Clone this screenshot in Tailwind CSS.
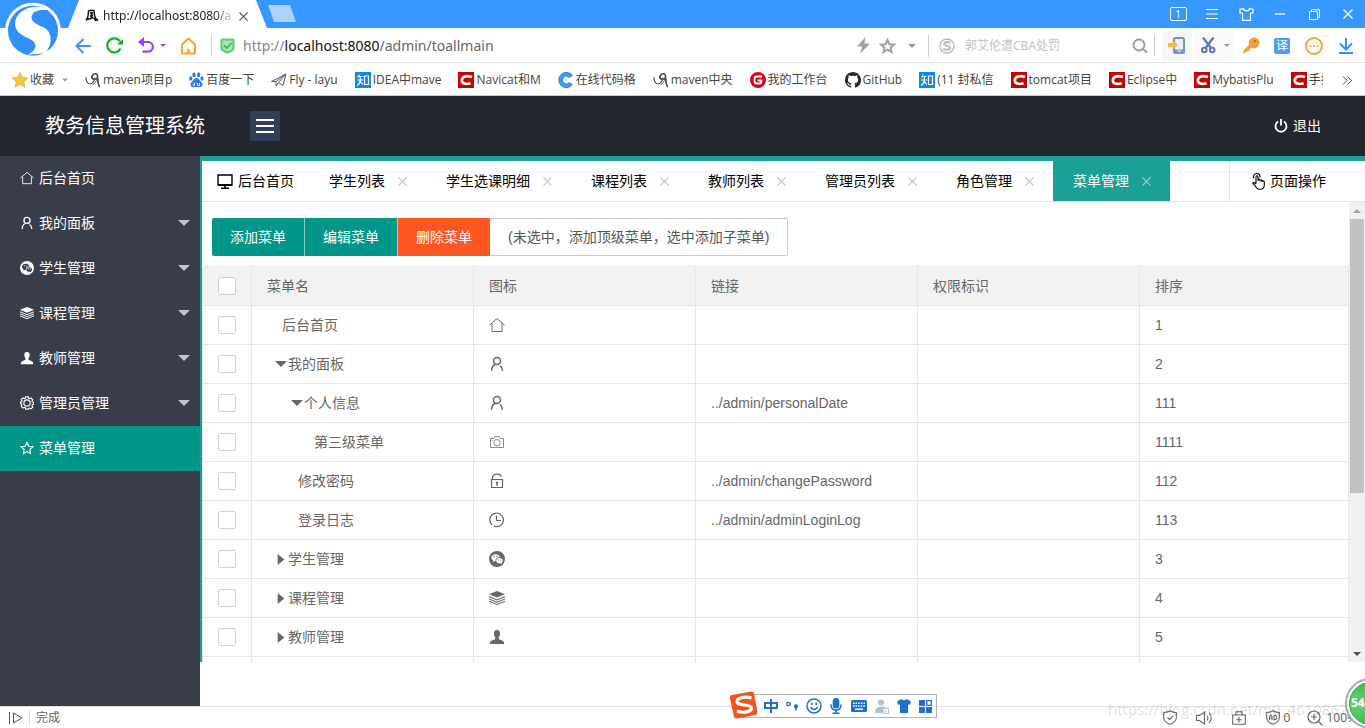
<!DOCTYPE html>
<html lang="zh-CN">
<head>
<meta charset="utf-8">
<title>教务信息管理系统</title>
<script src="https://cdn.jsdelivr.net/npm/@tailwindcss/browser@4"></script>
</head>
<body class="h-screen overflow-hidden flex flex-col bg-white font-['Noto_Sans','Noto_Sans_CJK_SC',sans-serif] text-xs text-[#444]">

<svg class="hidden" aria-hidden="true">
  <symbol id="i-home" viewBox="0 0 16 16"><path d="M.5 8 8 1.500 15.500 8M3 6.500V14.500H13V6.500" fill="none" stroke="currentColor"/></symbol>
  <symbol id="i-user" viewBox="0 0 16 16"><g fill="none" stroke="currentColor" stroke-width="1.500"><circle cx="8" cy="5" r="3.500"/><path d="M2.500 14.800C2.600 11.500 4 9.300 6.300 8.300M11 9.700c1.600 1 2.400 2.800 2.500 5.100"/></g></symbol>
  <symbol id="i-wechat" viewBox="0 0 16 16"><path fill-rule="evenodd" fill="currentColor" d="M8 0a8 8 0 1 0 0 16A8 8 0 0 0 8 0ZM6.500 3.200c2.300 0 4 1.300 4.300 3-2.500-.2-4.600 1.400-4.300 4l-1 0-1.600.9.400-1.500C3 8.800 2.300 7.700 2.300 6.600c0-1.900 1.800-3.400 4.200-3.400Zm4 3.900c1.900 0 3.300 1.200 3.300 2.600 0 .9-.5 1.600-1.200 2.100l.3 1.200-1.300-.7c-2.300.5-4.400-.8-4.400-2.600 0-1.400 1.400-2.600 3.300-2.600Z"/><g fill="currentColor"><circle cx="5" cy="5.500" r=".7"/><circle cx="8" cy="5.500" r=".7"/><circle cx="9.500" cy="9" r=".6"/><circle cx="11.700" cy="9" r=".6"/></g></symbol>
  <symbol id="i-layers" viewBox="0 0 16 16"><path d="M8 1 16 4.300 8 7.600 0 4.300Z" fill="currentColor"/><path d="M0 6.600 8 9.900 16 6.600M0 8.900 8 12.200 16 8.900M0 11.200 8 14.500 16 11.200" fill="none" stroke="currentColor" stroke-width="1.100"/></symbol>
  <symbol id="i-bust" viewBox="0 0 16 16"><path fill="currentColor" d="M8 1c2.100 0 3.200 1.300 3.100 3.500 0 1.700-.7 2.800-1.300 3.500v2c.8 1 5.200 1.400 5.200 3.500V15H1v-1.500C1 11.400 5.400 11 6.200 10V8C5.600 7.300 4.900 6.200 4.900 4.500 4.800 2.300 5.900 1 8 1Z"/></symbol>
  <symbol id="i-gear" viewBox="0 0 16 16"><g fill="none" stroke="currentColor" stroke-width="1.300"><path d="M6.500 1h3l.5 1.700 1 .4 1.600-.8 2 2-.9 1.600.4 1 1.400.3v2.400l-1.400.5-.4 1 .9 1.600-2 2-1.600-.9-1 .5L9.500 15h-3L6 13.400l-1-.5-1.600.9-2-2 .8-1.600-.4-1L.5 8.700V6.900L1.900 6.500l.4-1-.9-1.600 2-1.700 1.600.8 1-.4Z"/><circle cx="8" cy="8" r="3.600"/></g></symbol>
  <symbol id="i-star" viewBox="0 0 16 16"><path d="M8 1.500 10 6l4.800.5-3.600 3.200 1 4.800L8 12l-4.200 2.500 1-4.800L1.200 6.500 6 6Z" fill="none" stroke="currentColor" stroke-width="1.200"/></symbol>
  <symbol id="i-camera" viewBox="0 0 16 16"><g fill="none" stroke="currentColor" stroke-opacity=".75"><path d="M1.500 4.500H5l1-2h4l1 2h3.500v9h-13Z"/><circle cx="8" cy="8.700" r="3.200"/><path d="M3 6.500h1"/></g></symbol>
  <symbol id="i-lock" viewBox="0 0 16 16"><g fill="none" stroke="currentColor" stroke-width="1.200"><path d="M2.500 6.500h11v8h-11ZM3.500 6.500V4.500C3.500 2.300 5.500 1.200 8 1.200s4.200 1 4.500 2.500"/></g><path d="M8 8.500a1.200 1.200 0 0 1 .7 2.200V13H7.400v-2.300A1.200 1.200 0 0 1 8 8.500Z" fill="currentColor"/></symbol>
  <symbol id="i-clock" viewBox="0 0 16 16"><g fill="none" stroke="currentColor" stroke-width="1.200"><path d="M3 12.800A6.800 6.800 0 1 1 5 14.100M7.500 3.500V8.500H12"/></g></symbol>
  <symbol id="i-down" viewBox="0 0 12 6"><path d="M0 0H12L6 6Z" fill="currentColor"/></symbol>
  <symbol id="i-right" viewBox="0 0 6 10"><path d="M0 0V10L6 5Z" fill="currentColor"/></symbol>
  <symbol id="i-x" viewBox="0 0 10 10"><path d="M.5.5 9.500 9.500M9.500.5.5 9.500" fill="none" stroke="currentColor" stroke-width="1.300"/></symbol>
  <symbol id="b-maven" viewBox="0 0 16 16"><g fill="none" stroke="#444" stroke-linecap="round"><path d="M1 5.500C1 9.500 3 12 5 12c2.500 0 4.500-3.500 5-6" stroke-width="1.100"/><path d="M11.500 6.500C9 8.500 6 6.500 7 4S11.500 1 12.300 3c.8 3-.3 7 2 11.500" stroke-width="1.600"/><path d="M12 6c-.5 3-2 5.500-4 6.500" stroke-width=".8"/></g></symbol>
  <symbol id="b-csdn" viewBox="0 0 16 16"><path d="M0 0H16V16H0Z" fill="#c90000"/><path d="M14 5C8.500 3 4.200 4.600 3.800 8c-.3 3.700 4 4.800 8.800 3.300" fill="none" stroke="#fff" stroke-width="2.600"/></symbol>
  <symbol id="b-zhihu" viewBox="0 0 16 16"><path d="M0 0H16V16H0Z" fill="#0f88eb"/><g fill="none" stroke="#fff" stroke-width="1.200"><path d="M4.200 2.500C4 3.500 3.400 4.600 2.500 5.500M3.500 4.500H7.500M2 8H8M5.300 4.500V8C5 10.500 4 12.500 2.200 13.500M5.500 9.500 7.700 12.500M9.500 4h4v8.500h-4Z"/></g></symbol>
</svg>

<header class="relative shrink-0">
  <div class="h-7 bg-[#3698ff] flex items-stretch pl-17">
    <div class="w-[199px] bg-white flex items-center pl-4 pt-1 [clip-path:polygon(11px_0,188px_0,100%_100%,0_100%)] text-[#222]">
      <svg class="w-4 h-4 mr-[3px] shrink-0" viewBox="0 0 16 16" fill="none" stroke="#111" stroke-width="1.500"><path d="M4.500 2.500C4.500 7 4 10 2 12.500M4.500 2.500H10C10 7 11 11 14 12.500M6 5h3M7.500 4v6M6 8l3-.5M3.500 11.500l6-2M10 10l2 3"/></svg>
      <span class="w-[132px] overflow-hidden whitespace-nowrap [mask-image:linear-gradient(90deg,#000_85%,transparent)]">http://localhost:8080/a</span>
      <button class="p-1 text-[#555]" aria-label="关闭标签"><svg class="w-[9px] h-[9px]"><use href="#i-x"/></svg></button>
    </div>
    <button class="w-7 h-[17px] mt-[5px] ml-px bg-[#abd3ff] [clip-path:polygon(0_0,22px_0,100%_100%,6px_100%)]" aria-label="新标签页"></button>
    <div class="ml-auto flex text-white">
      <button class="w-[34px] grid place-items-center" aria-label="窗口数"><span class="w-[17px] h-[14px] border border-white rounded-xs text-[10px] leading-3">1</span></button>
      <button class="w-[34px] grid place-items-center" aria-label="菜单"><svg width="12" height="10" stroke="#fff"><path d="M0 .5H12M0 5H12M0 9.500H12"/></svg></button>
      <button class="w-[34px] grid place-items-center" aria-label="皮肤"><svg width="15" height="13" fill="none" stroke="#fff" stroke-width="1.200"><path d="M4.500.7 1 1.200V5H3.500V12.300h8V5H14V1.200L10.500.7C10 3.500 5 3.500 4.500.7Z"/></svg></button>
      <button class="w-[34px] grid place-items-center" aria-label="最小化"><svg width="10" height="2"><path d="M0 1H10" stroke="#fff" stroke-width="1.200"/></svg></button>
      <button class="w-[34px] grid place-items-center" aria-label="还原"><svg width="11" height="11" fill="none" stroke="#fff"><path d="M.5 2.500h8v8h-8ZM2.500 2.500v-2h8v8h-2"/></svg></button>
      <button class="w-[34px] grid place-items-center" aria-label="关闭"><svg class="w-[10px] h-[10px]"><use href="#i-x"/></svg></button>
    </div>
  </div>

  <div class="h-[35px] border-b border-[#e3e3e3] flex items-center pl-[75px] pt-px">
    <button class="mr-[15px]" aria-label="后退"><svg width="16" height="16" fill="none" stroke="#3698ff" stroke-width="2"><path d="M16 8H1.500M8.500 1 1.500 8l7 7"/></svg></button>
    <button class="mr-[15px]" aria-label="刷新"><svg width="17" height="17" fill="none"><path d="M14.500 11.500A7 7 0 1 1 14 4.500" stroke="#0bb41d" stroke-width="2.200"/><path d="M17 2V7.500H11Z" fill="#0bb41d"/></svg></button>
    <button class="mr-[5px]" aria-label="撤销"><svg width="17" height="17" fill="none"><path d="M4 5H10a4.800 4.800 0 0 1 0 9.700H4.500" stroke="#a33cf0" stroke-width="2.200"/><path d="M6 0V10L0 5Z" fill="#a33cf0"/></svg></button>
    <button class="mr-[14px] text-[#a33cf0]" aria-label="更多"><svg class="w-[6px] h-[3px]"><use href="#i-down"/></svg></button>
    <button class="mr-[14px]" aria-label="主页"><svg width="17" height="18" fill="none" stroke="#ffa51f" stroke-width="2"><path d="M2 7.500 8.500 1.500 15 7.500V16.500H2Z" stroke-linejoin="round"/><path d="M8.500 17V12" stroke-width="2.600"/></svg></button>
    <span class="w-px h-[22px] bg-[#ccc] mr-2"></span>
    <svg class="mr-2" width="15" height="16"><path d="M2 .5H13Q14.500.5 14.500 2V10.500Q14.500 13 7.500 15.800Q.5 13 .5 10.500V2Q.5.5 2 .5Z" fill="#5fc97a"/><path d="M2.500 2.500H12.500V10Q12.500 11.500 7.500 13.500Q2.500 11.500 2.500 10Z" fill="#a9e3b6"/><path d="M4 7.500 6.800 10 11.500 5" stroke="#3cb45a" stroke-width="1.800" fill="none"/></svg>
    <div role="textbox" aria-label="地址栏" contenteditable="true" class="flex-1 text-sm text-[#888] whitespace-nowrap">http://<span class="text-[#111]">localhost:8080</span><span class="text-[#666]">/admin/toallmain</span></div>
    <button class="mr-[9px]" aria-label="极速模式"><svg width="13" height="17" fill="#a0a0a0"><path d="M8.500 0 0 9.500H5L3.500 16.500 13 6.500H7.500Z"/></svg></button>
    <button class="mr-3 text-[#a0a0a0]" aria-label="收藏"><svg width="17" height="16" fill="none" stroke="#a0a0a0" stroke-width="2"><path d="M8.500 2 10.300 6.200 15 6.600 11.500 9.600 12.500 14 8.500 11.700 4.500 14 5.500 9.600 2 6.600 6.700 6.200Z"/></svg></button>
    <button class="mr-3 text-[#999]" aria-label="地址历史"><svg class="w-2 h-1"><use href="#i-down"/></svg></button>
    <span class="w-px h-[22px] bg-[#ccc] mr-[10px]"></span>
    <svg class="mr-[10px]" width="16" height="16" fill="none" stroke="#bbb"><circle cx="8" cy="8" r="7" stroke-width="1.300"/><path d="M11.500 4.800C8.500 3.500 5 4 5.200 6c.2 2.200 5.800 1.500 6 3.800.1 2.200-4 2.400-7 1.200" stroke-width="2"/></svg>
    <input aria-label="搜索" placeholder="郭艾伦遭CBA处罚" class="w-[167px] text-xs outline-none placeholder:text-[#c2c2c2]">
    <button class="mr-[6px]" aria-label="开始搜索"><svg width="16" height="16" fill="none" stroke="#999" stroke-width="1.800"><circle cx="7" cy="7" r="5.500"/><path d="M11 11 15 14.500"/></svg></button>
    <span class="w-px h-[22px] bg-[#ccc] mr-[7px]"></span>
    <button class="w-[30px] h-[30px] rounded-sm bg-[#f6f6f6] grid place-items-center mr-0.5" aria-label="手机"><svg width="18" height="17"><rect x="6" y="1" width="10" height="15" rx="1.500" fill="#e6effb" stroke="#7397c8" stroke-width="2"/><path d="M5.500 12.500H16.500V16H5.500Z" fill="#7397c8"/><path d="M9.500 14H13" stroke="#fff"/><path d="M0 6H4.500V3L10 8 4.500 13V10H0Z" fill="#f8b93c"/></svg></button>
    <button class="w-[39px] h-[30px] rounded-sm bg-[#f9f9f9] flex items-center pl-[7px] gap-2 mr-[10px] text-[#999]" aria-label="截图"><svg width="15" height="17" fill="none" stroke="#6272b8" stroke-width="2"><circle cx="3.300" cy="13" r="2.300"/><circle cx="11.200" cy="13" r="2.300"/><path d="M2 .5 10 11M12.500.5 4.500 11" stroke-width="2.200"/></svg><svg class="w-[6px] h-[3px]"><use href="#i-down"/></svg></button>
    <button class="mr-[14px]" aria-label="密码"><svg width="17" height="17"><path d="M10.500.5a5.500 5.500 0 1 1-2 10.300L6.500 12.500V14H4.500L1.500 16.500H.5V13.500L6 7.800A5.500 5.500 0 0 1 10.500.5Z" fill="#f0a040"/><circle cx="12" cy="4" r="1.200" fill="#b8702a"/></svg></button>
    <button class="w-4 h-4 rounded-xs bg-[#4a9ef8] text-white text-xs leading-4 mr-[15px] grid place-items-center" aria-label="翻译">译</button>
    <button class="mr-4" aria-label="更多功能"><svg width="18" height="18"><circle cx="9" cy="9" r="8" fill="none" stroke="#ffa51f" stroke-width="2"/><g fill="#ffa51f"><circle cx="5.500" cy="9" r="1.100"/><circle cx="9" cy="9" r="1.100"/><circle cx="12.500" cy="9" r="1.100"/></g></svg></button>
    <button class="mr-3" aria-label="下载"><svg width="14" height="16" fill="none" stroke="#2f92f8" stroke-width="2"><path d="M7 0V11M1 5.500 7 11.500 13 5.500M0 15H14"/></svg></button>
  </div>

  <nav class="h-[33px] border-b border-[#c9c9c9] flex items-center pl-3 pr-[13px] pt-0.5 gap-[17px] whitespace-nowrap font-['Open_Sans','Noto_Sans_CJK_SC',sans-serif]" aria-label="收藏栏">
    <button class="flex items-center gap-0.5"><svg width="16" height="16"><path d="M8 .5 10.400 5.500 15.800 6 11.700 9.800 13 15.200 8 12.300 3 15.200 4.300 9.800.2 6 5.600 5.500Z" fill="#f8c63d" stroke="#e3a52c" stroke-width=".7"/></svg>收藏<svg class="w-[6px] h-[4px] ml-[6px] text-[#999]"><use href="#i-down"/></svg></button>
    <a href="#" class="flex items-center gap-0.5"><svg class="w-4 h-4"><use href="#b-maven"/></svg>maven项目p</a>
    <a href="#" class="flex items-center gap-0.5"><svg width="15" height="16" fill="#2f7de8"><ellipse cx="5" cy="2.800" rx="1.700" ry="2.500"/><ellipse cx="9.700" cy="2.800" rx="1.700" ry="2.500"/><ellipse cx="1.800" cy="6.500" rx="1.600" ry="2.200"/><ellipse cx="13" cy="6.500" rx="1.600" ry="2.200"/><path d="M7.500 6C10 6 10.500 8.500 12.500 10.200c2.500 2.500 0 5.500-2.500 5-1.500-.3-3.500-.3-5 0C2.500 15.700 0 12.700 2.500 10.200 4.500 8.500 5 6 7.500 6Z"/><path d="M5.500 10.500v3h-1q-1-1 1-1.500M8.500 11v2.500H10.500V11" stroke="#fff" stroke-width=".8" fill="none"/></svg>百度一下</a>
    <a href="#" class="flex items-center gap-0.5"><svg width="16" height="16" fill="none" stroke="#555c70"><path d="M.5 9.500 15 2 12 13.500 7.500 10.500 15 2 5 9.500ZM5 9.500V14L7.500 10.500"/></svg>Fly - layu</a>
    <a href="#" class="flex items-center gap-0.5"><svg class="w-4 h-4"><use href="#b-zhihu"/></svg>IDEA中mave</a>
    <a href="#" class="flex items-center gap-0.5"><svg class="w-4 h-4"><use href="#b-csdn"/></svg>Navicat和M</a>
    <a href="#" class="flex items-center gap-0.5"><svg width="16" height="16"><path d="M13 4.800A5.700 5.700 0 1 0 13 11.200" fill="none" stroke="#2b7fd0" stroke-width="4.600"/><path d="M13 4.800A5.700 5.700 0 1 0 13 11.200" fill="none" stroke="#35a0f5" stroke-width="3.400"/></svg>在线代码格</a>
    <a href="#" class="flex items-center gap-0.5"><svg class="w-4 h-4"><use href="#b-maven"/></svg>maven中央</a>
    <a href="#" class="flex items-center gap-0.5"><svg width="16" height="16"><circle cx="8" cy="8" r="8" fill="#d9001b"/><path d="M12 4.500H7Q4.500 4.500 4.500 7V9Q4.500 11.500 7 11.500H9.500Q11.500 11.500 11.500 8.500H7.500" fill="none" stroke="#fff" stroke-width="1.800"/></svg>我的工作台</a>
    <a href="#" class="flex items-center gap-0.5"><svg width="16" height="16"><path fill="#24292e" d="M8 0C3.580 0 0 3.580 0 8c0 3.540 2.290 6.530 5.470 7.590.4.070.55-.17.550-.38 0-.19-.01-.82-.01-1.490-2.010.37-2.530-.49-2.690-.94-.09-.23-.48-.94-.82-1.130-.28-.15-.68-.52-.01-.53.630-.01 1.080.580 1.230.820.720 1.210 1.870.870 2.330.660.070-.52.280-.87.510-1.070-1.780-.2-3.640-.89-3.640-3.950 0-.87.310-1.590.820-2.150-.08-.2-.36-1.020.080-2.120 0 0 .67-.21 2.200.820.640-.18 1.320-.27 2-.27s1.360.090 2 .27c1.530-1.040 2.200-.82 2.200-.82.440 1.100.160 1.920.080 2.120.510.560.820 1.270.820 2.150 0 3.070-1.870 3.750-3.650 3.950.290.250.540.730.540 1.480 0 1.070-.01 1.930-.01 2.200 0 .210.150.460.550.380A8.010 8.010 0 0 0 16 8c0-4.420-3.580-8-8-8Z"/></svg>GitHub</a>
    <a href="#" class="flex items-center gap-0.5"><svg class="w-4 h-4"><use href="#b-zhihu"/></svg>(11 封私信</a>
    <a href="#" class="flex items-center gap-0.5"><svg class="w-4 h-4"><use href="#b-csdn"/></svg>tomcat项目</a>
    <a href="#" class="flex items-center gap-0.5"><svg class="w-4 h-4"><use href="#b-csdn"/></svg>Eclipse中</a>
    <a href="#" class="flex items-center gap-0.5"><svg class="w-4 h-4"><use href="#b-csdn"/></svg>MybatisPlu</a>
    <a href="#" class="flex items-center gap-0.5 w-8 overflow-hidden"><svg class="w-4 h-4 shrink-0"><use href="#b-csdn"/></svg>手把</a>
    <button class="ml-auto" aria-label="更多收藏"><svg width="10" height="9" fill="none" stroke="#444"><path d="M1 .5 5 4.500 1 8.500M5.500.5l4 4-4 4"/></svg></button>
  </nav>

  <svg class="absolute left-1 top-0.5" width="58" height="58" viewBox="12 6 174 174"><circle cx="99" cy="92" r="84" fill="#fff"/><circle cx="99" cy="92" r="75" fill="#2f90f5"/><path fill="#fff" d="M150 30C110 8 48 25 45 70c0 32 30 38 50 50 20 14 12 34-12 44L136 160C160 128 157 92 127 80 100 70 88 58 98 42 106 28 130 30 150 30Z"/></svg>
</header>

<div class="h-15 shrink-0 bg-[#23262e] text-white flex items-center font-['Liberation_Sans','Noto_Sans_CJK_SC',sans-serif]">
  <h1 class="w-[250px] text-center text-xl">教务信息管理系统</h1>
  <button class="w-[30px] h-[30px] bg-[#2f4056] grid place-items-center" aria-label="折叠菜单"><svg width="18" height="16" stroke="#fff" stroke-width="2"><path d="M0 2H18M0 8H18M0 14H18"/></svg></button>
  <a href="#" class="ml-auto mr-11 flex items-center gap-[5px] text-sm"><svg width="14" height="14" fill="none" stroke="#fff" stroke-width="1.800"><path d="M4.200 2.500A5.500 5.500 0 1 0 9.800 2.500M7 0V6.500"/></svg>退出</a>
</div>

<div class="flex-1 min-h-0 flex text-sm font-['Liberation_Sans','Noto_Sans_CJK_SC',sans-serif]">
  <nav class="w-[200px] shrink-0 bg-[#393d49] text-white" aria-label="主菜单">
    <a href="#" class="h-[45px] flex items-center gap-[5px] pl-5 pr-[10px] pb-0.5"><svg class="w-[14px] h-[14px]"><use href="#i-home"/></svg>后台首页</a>
    <a href="#" class="h-[45px] flex items-center gap-[5px] pl-5 pr-[10px] pb-0.5"><svg class="w-[14px] h-[14px]"><use href="#i-user"/></svg>我的面板<svg class="w-3 h-[6px] ml-auto text-[#c4c5c8]"><use href="#i-down"/></svg></a>
    <a href="#" class="h-[45px] flex items-center gap-[5px] pl-5 pr-[10px] pb-0.5"><svg class="w-[14px] h-[14px]"><use href="#i-wechat"/></svg>学生管理<svg class="w-3 h-[6px] ml-auto text-[#c4c5c8]"><use href="#i-down"/></svg></a>
    <a href="#" class="h-[45px] flex items-center gap-[5px] pl-5 pr-[10px] pb-0.5"><svg class="w-[14px] h-[14px]"><use href="#i-layers"/></svg>课程管理<svg class="w-3 h-[6px] ml-auto text-[#c4c5c8]"><use href="#i-down"/></svg></a>
    <a href="#" class="h-[45px] flex items-center gap-[5px] pl-5 pr-[10px] pb-0.5"><svg class="w-[14px] h-[14px]"><use href="#i-bust"/></svg>教师管理<svg class="w-3 h-[6px] ml-auto text-[#c4c5c8]"><use href="#i-down"/></svg></a>
    <a href="#" class="h-[45px] flex items-center gap-[5px] pl-5 pr-[10px] pb-0.5"><svg class="w-[14px] h-[14px]"><use href="#i-gear"/></svg>管理员管理<svg class="w-3 h-[6px] ml-auto text-[#c4c5c8]"><use href="#i-down"/></svg></a>
    <a href="#" aria-current="page" class="h-[45px] flex items-center gap-[5px] pl-5 pr-[10px] pb-0.5 bg-[#009688]"><svg class="w-[14px] h-[14px]"><use href="#i-star"/></svg>菜单管理</a>
  </nav>

  <main class="flex-1 min-w-0 pb-11">
    <div class="h-full flex flex-col border-t-5 border-l-2 border-[#1aa094]">
      <div class="h-[41px] shrink-0 flex border-b border-[#e2e2e2] text-black">
        <button class="flex items-center gap-[5px] px-[15px]"><svg width="16" height="15" fill="none" stroke="#000"><path d="M1 1H15V11H1Z" stroke-width="1.400"/><path d="M1 11H15" stroke-width="2"/><path d="M8 11V14M4 14.300H12" stroke-width="1.600"/></svg>后台首页</button>
        <button class="flex items-center gap-2 pl-5 pr-[15px]">学生列表<span class="w-[18px] grid place-items-center text-[#c2c2c2]"><svg class="w-[9px] h-[9px]"><use href="#i-x"/></svg></span></button>
        <button class="flex items-center gap-2 pl-5 pr-[15px]">学生选课明细<span class="w-[18px] grid place-items-center text-[#c2c2c2]"><svg class="w-[9px] h-[9px]"><use href="#i-x"/></svg></span></button>
        <button class="flex items-center gap-2 pl-5 pr-[15px]">课程列表<span class="w-[18px] grid place-items-center text-[#c2c2c2]"><svg class="w-[9px] h-[9px]"><use href="#i-x"/></svg></span></button>
        <button class="flex items-center gap-2 pl-5 pr-[15px]">教师列表<span class="w-[18px] grid place-items-center text-[#c2c2c2]"><svg class="w-[9px] h-[9px]"><use href="#i-x"/></svg></span></button>
        <button class="flex items-center gap-2 pl-5 pr-[15px]">管理员列表<span class="w-[18px] grid place-items-center text-[#c2c2c2]"><svg class="w-[9px] h-[9px]"><use href="#i-x"/></svg></span></button>
        <button class="flex items-center gap-2 pl-5 pr-[15px]">角色管理<span class="w-[18px] grid place-items-center text-[#c2c2c2]"><svg class="w-[9px] h-[9px]"><use href="#i-x"/></svg></span></button>
        <button class="flex items-center gap-2 pl-5 pr-[15px] bg-[#1aa094] text-white">菜单管理<span class="w-[18px] grid place-items-center text-[#a9cfca]"><svg class="w-[9px] h-[9px]"><use href="#i-x"/></svg></span></button>
        <button class="ml-auto w-34 border-l border-[#e2e2e2] flex items-center gap-1 pl-[21px]"><svg width="15" height="18" fill="none" stroke="#000" stroke-width="1.100"><path d="M5 11.500V4.500Q6 3 7 4.500V9M7 7.500q1.200-1 2 .3V9.500M9 8.200q1.200-.8 2 .3V10M11 9q2-.6 2.300 1.200V13q0 4-4 4.300H7.500Q5.500 16.500 4.300 14L1.700 11.200Q2.500 9.500 5 12M3 6.500A3.300 3.300 0 1 1 9 5.500"/></svg>页面操作</button>
      </div>

      <div class="flex-1 min-h-0 flex text-[#666]">
        <section class="flex-1 min-w-0 overflow-hidden">
          <div class="flex pl-[10px] pt-4 pb-[10px]">
            <button class="h-[38px] px-[18px] bg-[#009688] text-white rounded-l-xs">添加菜单</button>
            <button class="h-[38px] px-[18px] bg-[#009688] text-white border-l border-[#80cbc4]">编辑菜单</button>
            <button class="h-[38px] px-[18px] bg-[#ff5722] text-white border-l border-[#ffab91]">删除菜单</button>
            <button class="h-[38px] px-[18px] border border-l-0 border-[#c9c9c9] rounded-r-xs text-[#555]">(未选中，添加顶级菜单，选中添加子菜单)</button>
          </div>
          <table class="w-full table-fixed border-separate border-spacing-0 border-t border-l border-[#e6e6e6] [&_td]:border-r [&_td]:border-b [&_th]:border-r [&_th]:border-b [&_td]:border-[#e6e6e6] [&_th]:border-[#e6e6e6] [&_td]:h-[39px] [&_th]:h-[39px] [&_td]:px-[15px] [&_th]:px-[15px] [&_td]:py-0 [&_th]:py-0 [&_th]:font-normal [&_th]:text-left [&_input]:block [&_input]:appearance-none [&_input]:size-[18px] [&_input]:rounded-xs [&_input]:border [&_input]:border-[#d2d2d2] [&_input]:bg-white">
            <colgroup><col class="w-[49px]"><col class="w-[222px]"><col class="w-[222px]"><col class="w-[222px]"><col class="w-[222px]"><col></colgroup>
            <thead class="bg-[#f2f2f2]">
              <tr><th><input type="checkbox" aria-label="全选"></th><th>菜单名</th><th>图标</th><th>链接</th><th>权限标识</th><th>排序</th></tr>
            </thead>
            <tbody>
              <tr><td><input type="checkbox" aria-label="选择后台首页"></td><td><div class="pl-[15px]">后台首页</div></td><td><svg class="w-4 h-4"><use href="#i-home"/></svg></td><td></td><td></td><td>1</td></tr>
              <tr><td><input type="checkbox" aria-label="选择我的面板"></td><td><div class="pl-2 flex items-center gap-px"><svg class="w-3 h-[6px]"><use href="#i-down"/></svg>我的面板</div></td><td><svg class="w-4 h-4"><use href="#i-user"/></svg></td><td></td><td></td><td>2</td></tr>
              <tr><td><input type="checkbox" aria-label="选择个人信息"></td><td><div class="pl-6 flex items-center gap-px"><svg class="w-3 h-[6px]"><use href="#i-down"/></svg>个人信息</div></td><td><svg class="w-4 h-4"><use href="#i-user"/></svg></td><td>../admin/personalDate</td><td></td><td>111</td></tr>
              <tr><td><input type="checkbox" aria-label="选择第三级菜单"></td><td><div class="pl-[47px]">第三级菜单</div></td><td><svg class="w-4 h-4"><use href="#i-camera"/></svg></td><td></td><td></td><td>1111</td></tr>
              <tr><td><input type="checkbox" aria-label="选择修改密码"></td><td><div class="pl-[31px]">修改密码</div></td><td><svg class="w-4 h-4"><use href="#i-lock"/></svg></td><td>../admin/changePassword</td><td></td><td>112</td></tr>
              <tr><td><input type="checkbox" aria-label="选择登录日志"></td><td><div class="pl-[31px]">登录日志</div></td><td><svg class="w-4 h-4"><use href="#i-clock"/></svg></td><td>../admin/adminLoginLog</td><td></td><td>113</td></tr>
              <tr><td><input type="checkbox" aria-label="选择学生管理"></td><td><div class="pl-2 flex items-center gap-px"><svg class="w-3 h-[11px]"><use href="#i-right"/></svg>学生管理</div></td><td><svg class="w-4 h-4"><use href="#i-wechat"/></svg></td><td></td><td></td><td>3</td></tr>
              <tr><td><input type="checkbox" aria-label="选择课程管理"></td><td><div class="pl-2 flex items-center gap-px"><svg class="w-3 h-[11px]"><use href="#i-right"/></svg>课程管理</div></td><td><svg class="w-4 h-4"><use href="#i-layers"/></svg></td><td></td><td></td><td>4</td></tr>
              <tr><td><input type="checkbox" aria-label="选择教师管理"></td><td><div class="pl-2 flex items-center gap-px"><svg class="w-3 h-[11px]"><use href="#i-right"/></svg>教师管理</div></td><td><svg class="w-4 h-4"><use href="#i-bust"/></svg></td><td></td><td></td><td>5</td></tr>
              <tr><td></td><td></td><td></td><td></td><td></td><td></td></tr>
            </tbody>
          </table>
        </section>
        <div class="w-4 shrink-0 bg-[#f1f1f1] flex flex-col items-center" aria-hidden="true">
          <div class="h-[17px] flex items-center text-[#a3a3a3]"><svg class="w-[8px] h-1 rotate-180"><use href="#i-down"/></svg></div>
          <div class="w-[14px] h-[274px] bg-[#c1c1c1]"></div>
          <div class="mt-auto h-[17px] flex items-center text-[#505050]"><svg class="w-[8px] h-1"><use href="#i-down"/></svg></div>
        </div>
      </div>
    </div>
  </main>
</div>

<footer class="relative h-[22px] shrink-0 border-t border-[#e0e0e0] flex items-center pl-[9px] text-[#666]">
  <svg width="14" height="12" fill="none" stroke="#555"><path d="M.5 0V12M4.500 1 13 6 4.500 11Z"/></svg>
  <span class="w-px h-4 bg-[#ddd] mx-[6px]"></span>完成
  <div class="ml-auto flex items-center pr-2">
    <svg class="mr-[19px]" width="14" height="15" fill="none" stroke="#666" stroke-width="1.100"><path d="M7 .7Q10 2.500 13.300 2.500V8Q13 12 7 14.300Q1 12 .7 8V2.500Q4 2.500 7 .7Z"/><path d="M4.500 7.500 6.500 9.500 10 6"/></svg>
    <svg class="mr-[19px]" width="17" height="14" fill="none" stroke="#666" stroke-width="1.100"><path d="M.5 4.500H3.500L8.500 1V13L3.500 9.500H.5ZM11 4.500Q12.800 7 11 9.500M13 2Q17.500 7 13 12"/></svg>
    <svg class="mr-5" width="14" height="14" fill="none" stroke="#666" stroke-width="1.100"><path d="M.7 4H13.300V13.300H.7ZM4 4V.7H10V4M7 6V11.500M4.200 8.700H9.800"/></svg>
    <span class="flex items-center gap-1 mr-[17px]"><svg width="14" height="15" fill="none" stroke="#666" stroke-width="1.100"><path d="M7 .7Q10 2.500 13.300 2.500V8Q13 12 7 14.300Q1 12 .7 8V2.500Q4 2.500 7 .7Z"/><path d="M3.500 10V6.500L4.700 5 6 6.500V10M3.500 8H6M8 5.300V9.700Q10.700 10 10.700 7.500T8 5.300"/></svg>0</span>
    <span class="flex items-center gap-[3px]"><svg width="16" height="16" fill="none" stroke="#666" stroke-width="1.200"><circle cx="7" cy="7" r="6"/><path d="M11.500 11.500 15.500 15.500M4 7H10M7 4V10"/></svg>100%</span>
  </div>
  <div class="absolute right-[9px] -top-2 text-[15px] leading-5 text-black/15 font-['Open_Sans',sans-serif] pointer-events-none">https://blog.csdn.net/m0_46108628</div>
  <div class="absolute -right-[31px] -top-[29px] w-[51px] h-[51px] rounded-full border-2 border-[#aaa] bg-white p-0.5"><div class="size-full rounded-full bg-linear-to-b from-[#3dbb55] via-[#63d36c] to-[#35c048] border border-[#35a04c] pl-px leading-[39px] text-white font-bold text-xs">54</div></div>

  <div class="absolute left-[742px] -top-[13px] w-[195px] h-6 border border-[#b3b3c0] bg-white flex items-center justify-between pl-[21px] pr-1 text-[#1f70c9]">
    <svg class="absolute -left-[14px] -top-[4px]" width="29" height="28"><path d="M3 4 22 .5Q24.500.3 25 2.500L28.500 21Q28.800 23.500 26.500 24L8 27.500Q5.500 28 5 25.500L.8 7Q.5 4.500 3 4Z" fill="#f2541b"/><path d="M22.500 7C17 5 8 6.500 8 10.500c0 5 14 2 14.500 6.500.3 4-9 5.500-14.500 3" fill="none" stroke="#fff" stroke-width="3.200"/></svg>
    <button aria-label="中文"><svg width="14" height="14" fill="none" stroke="currentColor" stroke-width="2"><path d="M1 4H13V9H1ZM7 0V14"/></svg></button>
    <button aria-label="标点"><svg width="12" height="12"><circle cx="2.500" cy="4" r="1.700" fill="none" stroke="currentColor" stroke-width="1.300"/><path d="M8 6a2 2 0 1 1 3.500 1.500Q11 10 8 11.500 9.500 10 9.200 8.500A2 2 0 0 1 8 6Z" fill="currentColor"/></svg></button>
    <button aria-label="表情"><svg width="16" height="16" fill="none" stroke="currentColor" stroke-width="1.500"><circle cx="8" cy="8" r="7"/><path d="M4.500 9Q8 14 11.500 9M5.800 4.500V7M10.200 4.500V7"/></svg></button>
    <button aria-label="语音"><svg width="12" height="16" fill="none" stroke="currentColor" stroke-width="1.600"><rect x="3.500" y=".8" width="5" height="9" rx="2.500" fill="currentColor"/><path d="M1 6.500Q1 12 6 12T11 6.500M6 12V15M2.500 15.200H9.500"/></svg></button>
    <button aria-label="键盘"><svg width="16" height="12"><rect width="16" height="12" rx="1.500" fill="currentColor"/><path d="M2 3.200H14M2 6H14" stroke="#fff" stroke-width="1.500" stroke-dasharray="1.500 1.100"/><path d="M4 9.200H12" stroke="#fff" stroke-width="1.400"/></svg></button>
    <button class="text-[#b4bfd3]" aria-label="账号"><svg width="14" height="15"><circle cx="6" cy="3.500" r="3" fill="currentColor"/><path d="M0 14Q0 7.500 6 7.500T11 11V14Z" fill="currentColor"/><path d="M8 9.500H13.500V14.500H8Z" fill="#fff" stroke="currentColor"/><path d="M10.700 11v2" stroke="currentColor"/></svg></button>
    <button aria-label="皮肤"><svg width="14" height="14" fill="currentColor"><path d="M4 0Q7 2.500 10 0L14 2.500 12.500 6 11 5.500V14H3V5.500L1.500 6 0 2.500Z"/></svg></button>
    <button aria-label="工具箱"><svg width="13" height="13" fill="currentColor"><path d="M0 0H6V6H0ZM0 7H6V13H0ZM7 7H13V13H7Z"/><path d="M7.700.7H12.300V5.300H7.700Z" fill="none" stroke="currentColor" stroke-width="1.300"/></svg></button>
  </div>
</footer>
</body>
</html>
